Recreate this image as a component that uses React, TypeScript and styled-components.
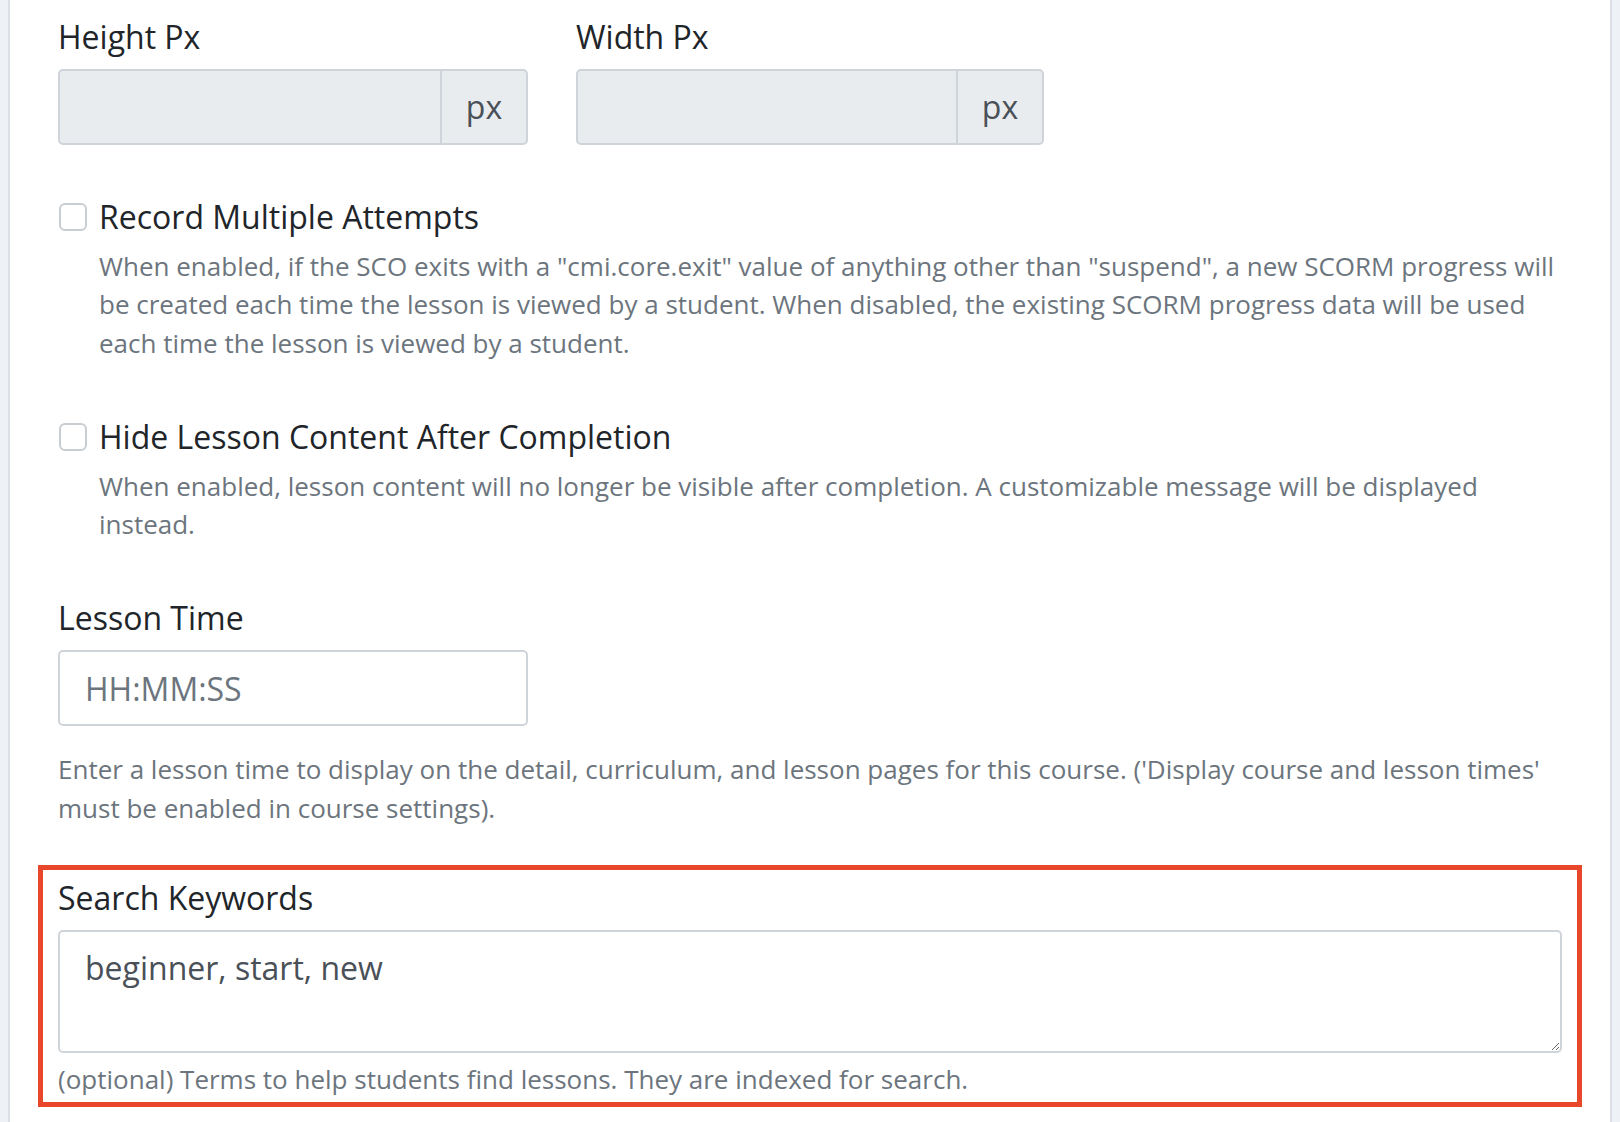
import React from "react";
import styled, { createGlobalStyle } from "styled-components";

const Global = createGlobalStyle`
  html, body { margin: 0; padding: 0; background: #ffffff; }
  body { font-family: "Open Sans", "Noto Sans", sans-serif; overflow: hidden; }
  * { box-sizing: border-box; }
`;

const Page = styled.div`
  display: flex;
  width: 1620px;
  height: 1122px;
  overflow: hidden;
  background: #ffffff;
`;

const Rail = styled.div<{ $side: "left" | "right" }>`
  flex: 0 0 10px;
  background: #eef2f6;
  ${(p) => (p.$side === "left" ? "border-right: 2px solid #dcdfe3;" : "border-left: 2px solid #dcdfe3;")}
`;

const Main = styled.main`
  flex: 1;
  padding: 13px 48px 0 48px;
  display: flex;
  flex-direction: column;
`;

const Label = styled.label`
  display: block;
  font-size: 32px;
  line-height: 48px;
  color: #212529;
  margin-bottom: 8px;
`;

const Row = styled.div`
  display: flex;
  gap: 48px;
`;

const Group = styled.div<{ $width?: number; $mb?: number }>`
  width: ${(p) => (p.$width ? `${p.$width}px` : "auto")};
  margin-bottom: ${(p) => p.$mb ?? 0}px;
`;

const InputGroup = styled.div`
  display: flex;
  height: 76px;
  border: 2px solid #ced4da;
  border-radius: 5px;
  background: #e9ecef;
  overflow: hidden;
`;

const GroupInput = styled.div`
  flex: 1;
`;

const Addon = styled.div`
  flex: 0 0 86px;
  border-left: 2px solid #ced4da;
  display: flex;
  align-items: center;
  justify-content: center;
  font-size: 32px;
  color: #495057;
  padding-bottom: 2px;
`;

const TextInput = styled.div`
  height: 76px;
  border: 2px solid #ced4da;
  border-radius: 5px;
  background: #ffffff;
  padding: 0 25px;
  display: flex;
  align-items: center;
  font-size: 32px;
  color: #6c757d;
`;

const CheckRow = styled.div`
  display: flex;
  align-items: center;
  height: 48px;
`;

const Box = styled.span`
  flex: 0 0 28px;
  width: 28px;
  height: 28px;
  margin-left: 1px;
  margin-right: 12px;
  border: 2px solid #c8cdd2;
  border-radius: 6px;
  background: #ffffff;
`;

const CheckText = styled.span`
  font-size: 32px;
  line-height: 48px;
  color: #212529;
`;

const Desc = styled.p<{ $indent?: boolean; $mt?: number }>`
  margin: ${(p) => p.$mt ?? 6}px 0 0 0;
  padding-left: ${(p) => (p.$indent ? 41 : 0)}px;
  font-size: 26px;
  line-height: 38.3px;
  color: #6c757d;
`;

const Highlight = styled.section`
  margin: 0 -20px;
  border: 5px solid #e9472c;
  padding: 4px 15px 4px 15px;
`;

const TextArea = styled.textarea`
  display: block;
  width: 100%;
  height: 123px;
  border: 2px solid #ced4da;
  border-radius: 5px;
  padding: 12px 25px;
  font-family: "Open Sans", "Noto Sans", sans-serif;
  font-size: 32px;
  line-height: 48px;
  color: #495057;
  background: #ffffff;
  resize: vertical;
  outline: none;
`;

export default function App() {
  return (
    <>
      <Global />
      <Page>
        <Rail $side="left" />
        <Main>
          <Row>
            <Group $width={470} $mb={48}>
              <Label>Height Px</Label>
              <InputGroup>
                <GroupInput />
                <Addon>px</Addon>
              </InputGroup>
            </Group>
            <Group $width={468} $mb={48}>
              <Label>Width Px</Label>
              <InputGroup>
                <GroupInput />
                <Addon>px</Addon>
              </InputGroup>
            </Group>
          </Row>

          <Group $mb={51}>
            <CheckRow>
              <Box />
              <CheckText>Record Multiple Attempts</CheckText>
            </CheckRow>
            <Desc $indent>
              When enabled, if the SCO exits with a "cmi.core.exit" value of anything other than "suspend", a new
              SCORM progress will be created each time the lesson is viewed by a student. When disabled, the existing
              SCORM progress data will be used each time the lesson is viewed by a student.
            </Desc>
          </Group>

          <Group $mb={51}>
            <CheckRow>
              <Box />
              <CheckText>Hide Lesson Content After Completion</CheckText>
            </CheckRow>
            <Desc $indent>
              When enabled, lesson content will no longer be visible after completion. A customizable message will be
              displayed instead.
            </Desc>
          </Group>

          <Group $mb={38}>
            <Label>Lesson Time</Label>
            <Group $width={470}>
              <TextInput>HH:MM:SS</TextInput>
            </Group>
            <Desc $mt={24}>
              Enter a lesson time to display on the detail, curriculum, and lesson pages for this course. ('Display
              course and lesson times' must be enabled in course settings).
            </Desc>
          </Group>

          <Highlight>
            <Label>Search Keywords</Label>
            <TextArea defaultValue="beginner, start, new" />
            <Desc $mt={7}>(optional) Terms to help students find lessons. They are indexed for search.</Desc>
          </Highlight>
        </Main>
        <Rail $side="right" />
      </Page>
    </>
  );
}
